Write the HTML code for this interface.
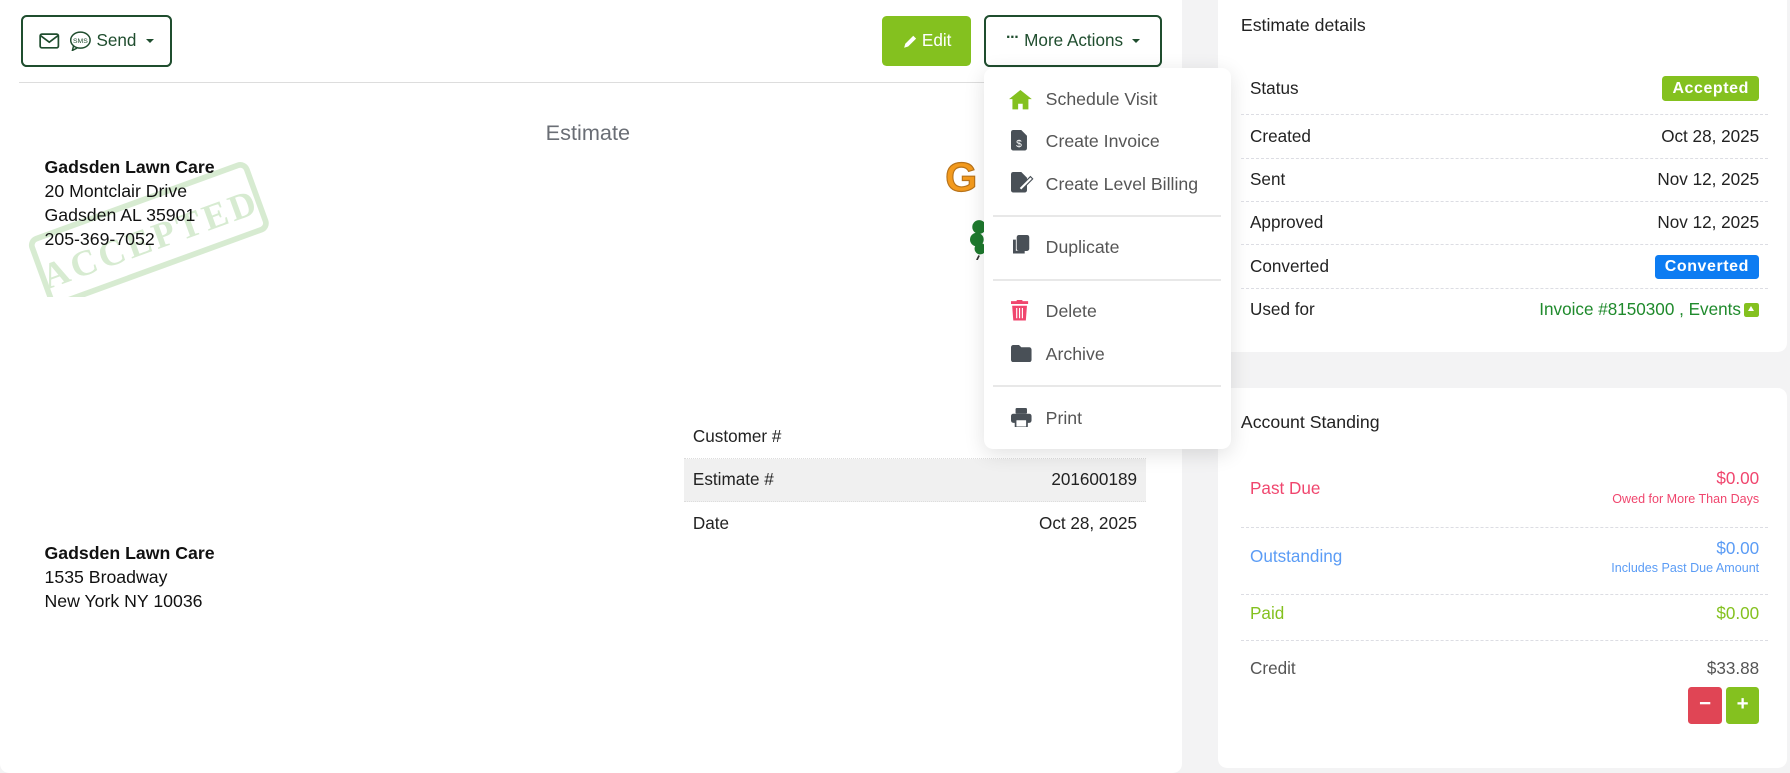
<!DOCTYPE html>
<html><head><meta charset="utf-8"><style>
html,body{margin:0;padding:0;width:1790px;height:773px;overflow:hidden;background:#f3f3f4}
#w{zoom:1.14158;position:relative;width:1568px;height:677px;font-family:"Liberation Sans",sans-serif;color:#222;font-size:15px}
.a{position:absolute}
.card{position:absolute;background:#fff;border-radius:8px}
.btn{position:absolute;border:2px solid #1f4d2e;border-radius:5px;box-sizing:border-box;display:flex;align-items:center;justify-content:center;color:#1f4d2e;font-size:15px}
.caret{display:inline-block;border-left:4px solid transparent;border-right:4px solid transparent;border-top:4px solid #1f4d2e;margin-left:8px;vertical-align:middle}
.menu{position:absolute;left:862px;top:60px;width:216px;height:333px;background:#fff;border-radius:8px;box-shadow:0 4px 18px rgba(0,0,0,.12)}
.mi{position:absolute;left:54px;color:#555;font-size:15.5px}
.ic{position:absolute;left:22px}
.sep{position:absolute;left:8px;right:8px;height:2px;background:#e8e8e8}
.row{position:absolute;left:1087px;width:462px;border-bottom:1px dashed #dcdde3}
.lab{position:absolute;left:8px}
.val{position:absolute;right:8px}
.badge{position:absolute;right:8px;color:#fff;font-weight:bold;border-radius:3px;font-size:14px;padding:3px 9px;letter-spacing:.5px}
</style></head><body><div id="w">
<div class="card" style="left:0;top:-8px;width:1035px;height:685px"></div>
<div class="card" style="left:1067px;top:-8px;width:498px;height:316px"></div>
<div class="card" style="left:1067px;top:340px;width:498px;height:333px"></div>

<div class="btn" style="left:18px;top:13px;width:133px;height:46px">
<svg width="18" height="14" viewBox="0 0 18 14" style="margin-right:8px"><rect x="1" y="1" width="16" height="12" rx="1.5" fill="none" stroke="#1f4d2e" stroke-width="1.5"/><path d="M1 2l8 6 8-6" fill="none" stroke="#1f4d2e" stroke-width="1.5"/></svg>
<svg width="20" height="18" viewBox="0 0 20 18" style="margin-right:4px"><ellipse cx="10" cy="8" rx="8.5" ry="7" fill="none" stroke="#1f4d2e" stroke-width="1.3"/><path d="M4 13l-1 4 4-2" fill="none" stroke="#1f4d2e" stroke-width="1.3"/><text x="10" y="10.5" font-size="6" text-anchor="middle" fill="#1f4d2e" font-family="Liberation Sans">SMS</text></svg>
Send<span class="caret"></span></div>

<div class="a" style="left:773px;top:14px;width:78px;height:44px;background:#84c11f;border-radius:4px;color:#fff;display:flex;align-items:center;justify-content:center;font-size:15px">
<svg width="13" height="13" viewBox="0 0 13 13" style="margin-right:4px"><path d="M1 12l1-3.5 7-7 2.5 2.5-7 7z" fill="#fff"/></svg>Edit</div>
<div class="btn" style="left:862px;top:13px;width:156px;height:46px">
<span style="font-weight:bold;letter-spacing:-1px;margin-right:5px;font-size:14px;position:relative;top:-3px">···</span>More Actions<span class="caret"></span></div>

<div class="a" style="left:17px;top:72px;width:1016px;height:1px;background:#ddd"></div>
<div class="a" style="left:478px;top:105px;font-size:19px;color:#6a6e75">Estimate</div>

<svg class="a" style="left:18px;top:140px" width="225" height="120" viewBox="0 0 225 120"><g transform="rotate(-20 112 65)" opacity=".3"><rect x="12" y="35" width="200" height="60" rx="6" fill="none" stroke="#7cbf6a" stroke-width="5"/><text x="112" y="80" font-size="32" font-family="Liberation Serif" font-weight="bold" fill="#7cbf6a" text-anchor="middle" letter-spacing="3">ACCEPTED</text></g></svg>

<div class="a" style="left:39px;top:137px;line-height:21px;font-size:15.5px;color:#111"><b>Gadsden Lawn Care</b><br>20 Montclair Drive<br>Gadsden AL 35901<br>205-369-7052</div>
<div class="a" style="left:39px;top:475px;line-height:21px;font-size:15.5px;color:#111"><b>Gadsden Lawn Care</b><br>1535 Broadway<br>New York NY 10036</div>

<div class="a" style="left:828px;top:135px;font-size:36px;font-weight:bold;color:#f39a1d;font-family:'Liberation Sans';-webkit-text-stroke:1px #b8731a">G</div>
<svg class="a" style="left:850px;top:192px" width="12" height="36" viewBox="0 0 12 36"><circle cx="8" cy="7" r="6" fill="#1e7a2e"/><circle cx="6" cy="18" r="6" fill="#1e7a2e"/><circle cx="9" cy="26" r="5" fill="#1e7a2e"/><path d="M8 32l-2 4" stroke="#333" stroke-width="1.5"/></svg>

<div class="a" style="left:599px;top:364px;width:405px;height:37px;border-bottom:1px dotted #ddd"><span class="a" style="left:8px;top:10px">Customer #</span></div>
<div class="a" style="left:599px;top:402px;width:405px;height:37px;background:#f0f0f0;border-bottom:1px dotted #ddd"><span class="a" style="left:8px;top:10px">Estimate #</span><span class="a" style="right:8px;top:10px">201600189</span></div>
<div class="a" style="left:599px;top:440px;width:405px;height:37px"><span class="a" style="left:8px;top:10px">Date</span><span class="a" style="right:8px;top:10px">Oct 28, 2025</span></div>

<div class="menu">
<svg class="ic" style="top:19px" width="20" height="17" viewBox="0 0 20 17"><path d="M10 0L0 8h3v9h5v-5h4v5h5V8h3z" fill="#84c11f"/></svg>
<div class="mi" style="top:18px">Schedule Visit</div>
<svg class="ic" style="top:54px;left:24px" width="14" height="18" viewBox="0 0 14 18"><path d="M0 2a2 2 0 012-2h7l5 5v11a2 2 0 01-2 2H2a2 2 0 01-2-2z" fill="#495057"/><text x="7" y="15" font-size="9" fill="#fff" text-anchor="middle" font-family="Liberation Sans">$</text></svg>
<div class="mi" style="top:55px">Create Invoice</div>
<svg class="ic" style="top:91px;left:24px" width="20" height="18" viewBox="0 0 20 18"><path d="M0 2a2 2 0 012-2h7l5 5v11a2 2 0 01-2 2H2a2 2 0 01-2-2z" fill="#495057"/><path d="M7 14l10-10 2 2-10 10z" fill="#fff" stroke="#495057" stroke-width="1"/></svg>
<div class="mi" style="top:92px">Create Level Billing</div>
<div class="sep" style="top:128px"></div>
<svg class="ic" style="top:146px;left:24px" width="16" height="18" viewBox="0 0 16 18"><rect x="5" y="0" width="11" height="14" rx="2" fill="#495057"/><path d="M3 4v11h9" fill="none" stroke="#495057" stroke-width="2.5"/></svg>
<div class="mi" style="top:148px">Duplicate</div>
<div class="sep" style="top:184px"></div>
<svg class="ic" style="top:203px;left:24px" width="15" height="18" viewBox="0 0 15 18"><rect x="0" y="1" width="15" height="2.5" fill="#f0466e"/><rect x="5" y="0" width="5" height="2" fill="#f0466e"/><path d="M1 5h13l-1 13H2z" fill="#f0466e"/><path d="M5 7v9M7.5 7v9M10 7v9" stroke="#fff" stroke-width="1"/></svg>
<div class="mi" style="top:204px">Delete</div>
<svg class="ic" style="top:242px;left:24px" width="18" height="15" viewBox="0 0 18 15"><path d="M0 2a2 2 0 012-2h5l2 2h7a2 2 0 012 2v9a2 2 0 01-2 2H2a2 2 0 01-2-2z" fill="#495057"/></svg>
<div class="mi" style="top:241px">Archive</div>
<div class="sep" style="top:277px"></div>
<svg class="ic" style="top:297px;left:24px" width="18" height="17" viewBox="0 0 18 17"><rect x="4" y="0" width="10" height="5" rx="1" fill="#495057"/><rect x="0" y="5" width="18" height="8" rx="2" fill="#495057"/><rect x="4" y="10" width="10" height="7" rx="1" fill="#fff" stroke="#495057" stroke-width="1.5"/></svg>
<div class="mi" style="top:297px">Print</div>
</div>

<div class="a" style="left:1087px;top:13px;font-size:15.5px;color:#222">Estimate details</div>
<div class="row" style="top:59px;height:41px"><span class="lab" style="top:10px">Status</span><span class="badge" style="top:8px;background:#84c11f">Accepted</span></div>
<div class="row" style="top:101px;height:37px"><span class="lab" style="top:10px">Created</span><span class="val" style="top:10px">Oct 28, 2025</span></div>
<div class="row" style="top:139px;height:37px"><span class="lab" style="top:10px">Sent</span><span class="val" style="top:10px">Nov 12, 2025</span></div>
<div class="row" style="top:177px;height:37px"><span class="lab" style="top:10px">Approved</span><span class="val" style="top:10px">Nov 12, 2025</span></div>
<div class="row" style="top:215px;height:37px"><span class="lab" style="top:10px">Converted</span><span class="badge" style="top:8px;background:#0d7cf2">Converted</span></div>
<div class="row" style="top:253px;height:37px;border:none"><span class="lab" style="top:10px">Used for</span><span class="val" style="top:10px;color:#1f8a2c;right:24px">Invoice #8150300 , Events</span><span class="a" style="right:8px;top:12px;width:13px;height:13px;background:#84c11f;border-radius:2px"><span class="a" style="left:3px;top:3px;border-left:3.5px solid transparent;border-right:3.5px solid transparent;border-bottom:5px solid #fff"></span></span></div>

<div class="a" style="left:1087px;top:361px;font-size:15.5px;color:#222">Account Standing</div>
<div class="row" style="top:400px;height:62px"><span class="lab" style="top:20px;color:#f0466e">Past Due</span><span class="val" style="top:11px;color:#f0466e">$0.00</span><span class="val" style="top:31px;font-size:11px;color:#f0466e">Owed for More Than Days</span></div>
<div class="row" style="top:463px;height:57px"><span class="lab" style="top:16px;color:#5b9cf5">Outstanding</span><span class="val" style="top:9px;color:#5b9cf5">$0.00</span><span class="val" style="top:28px;font-size:11px;color:#5b9cf5">Includes Past Due Amount</span></div>
<div class="row" style="top:521px;height:40px"><span class="lab" style="top:8px;color:#84c11f">Paid</span><span class="val" style="top:8px;color:#84c11f">$0.00</span></div>
<div class="row" style="top:562px;height:80px;border:none"><span class="lab" style="top:15px;color:#555">Credit</span><span class="val" style="top:15px;color:#555">$33.88</span>
<span class="a" style="right:41px;top:40px;width:29px;height:32px;background:#e04555;border-radius:3px;color:#fff;text-align:center;line-height:30px;font-weight:bold;font-size:18px">−</span>
<span class="a" style="right:8px;top:40px;width:29px;height:32px;background:#84c11f;border-radius:3px;color:#fff;text-align:center;line-height:30px;font-weight:bold;font-size:18px">+</span></div>
</div></body></html>
